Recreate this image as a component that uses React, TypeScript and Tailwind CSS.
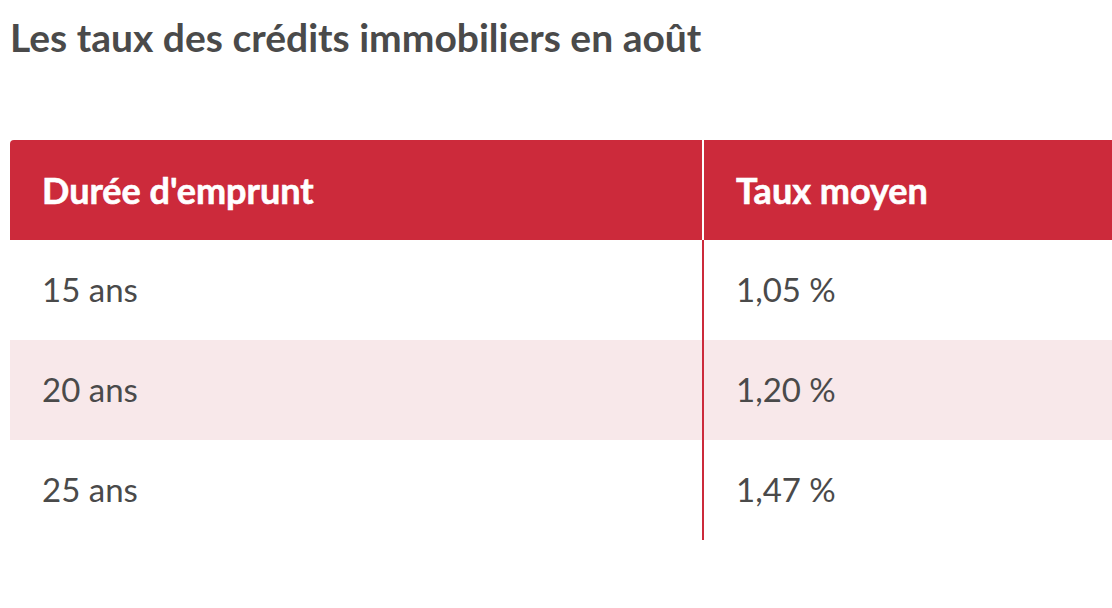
import React from "react";

const rows = [
  { duree: "15 ans", taux: "1,05 %" },
  { duree: "20 ans", taux: "1,20 %" },
  { duree: "25 ans", taux: "1,47 %" },
];

export default function App() {
  return (
    <div className="w-[1112px] h-[608px] bg-white overflow-hidden font-['Lato',sans-serif] text-[#4a4a4a]">
      <h1 className="pl-[10px] pt-[12px] text-[39px] leading-[50px] font-bold">
        Les taux des crédits immobiliers en août
      </h1>
      <div className="mt-[78px] ml-[10px] w-[1120px]">
        <div className="flex h-[100px] bg-[#cc2a3b] rounded-tl-[4px] text-white font-bold text-[36px] [-webkit-text-stroke:0.6px_white]">
          <div className="w-[692px] pl-[32px] flex items-center">Durée d'emprunt</div>
          <div className="flex-1 pl-[32px] flex items-center border-l-2 border-white">Taux moyen</div>
        </div>
        {rows.map((r, i) => (
          <div
            key={r.duree}
            className={`flex h-[100px] text-[33px] ${i === 1 ? "bg-[#f8e8ea]" : "bg-white"}`}
          >
            <div className="w-[692px] pl-[32px] flex items-center">{r.duree}</div>
            <div className="flex-1 pl-[32px] flex items-center border-l-2 border-[#cc2a3b]">{r.taux}</div>
          </div>
        ))}
      </div>
    </div>
  );
}
